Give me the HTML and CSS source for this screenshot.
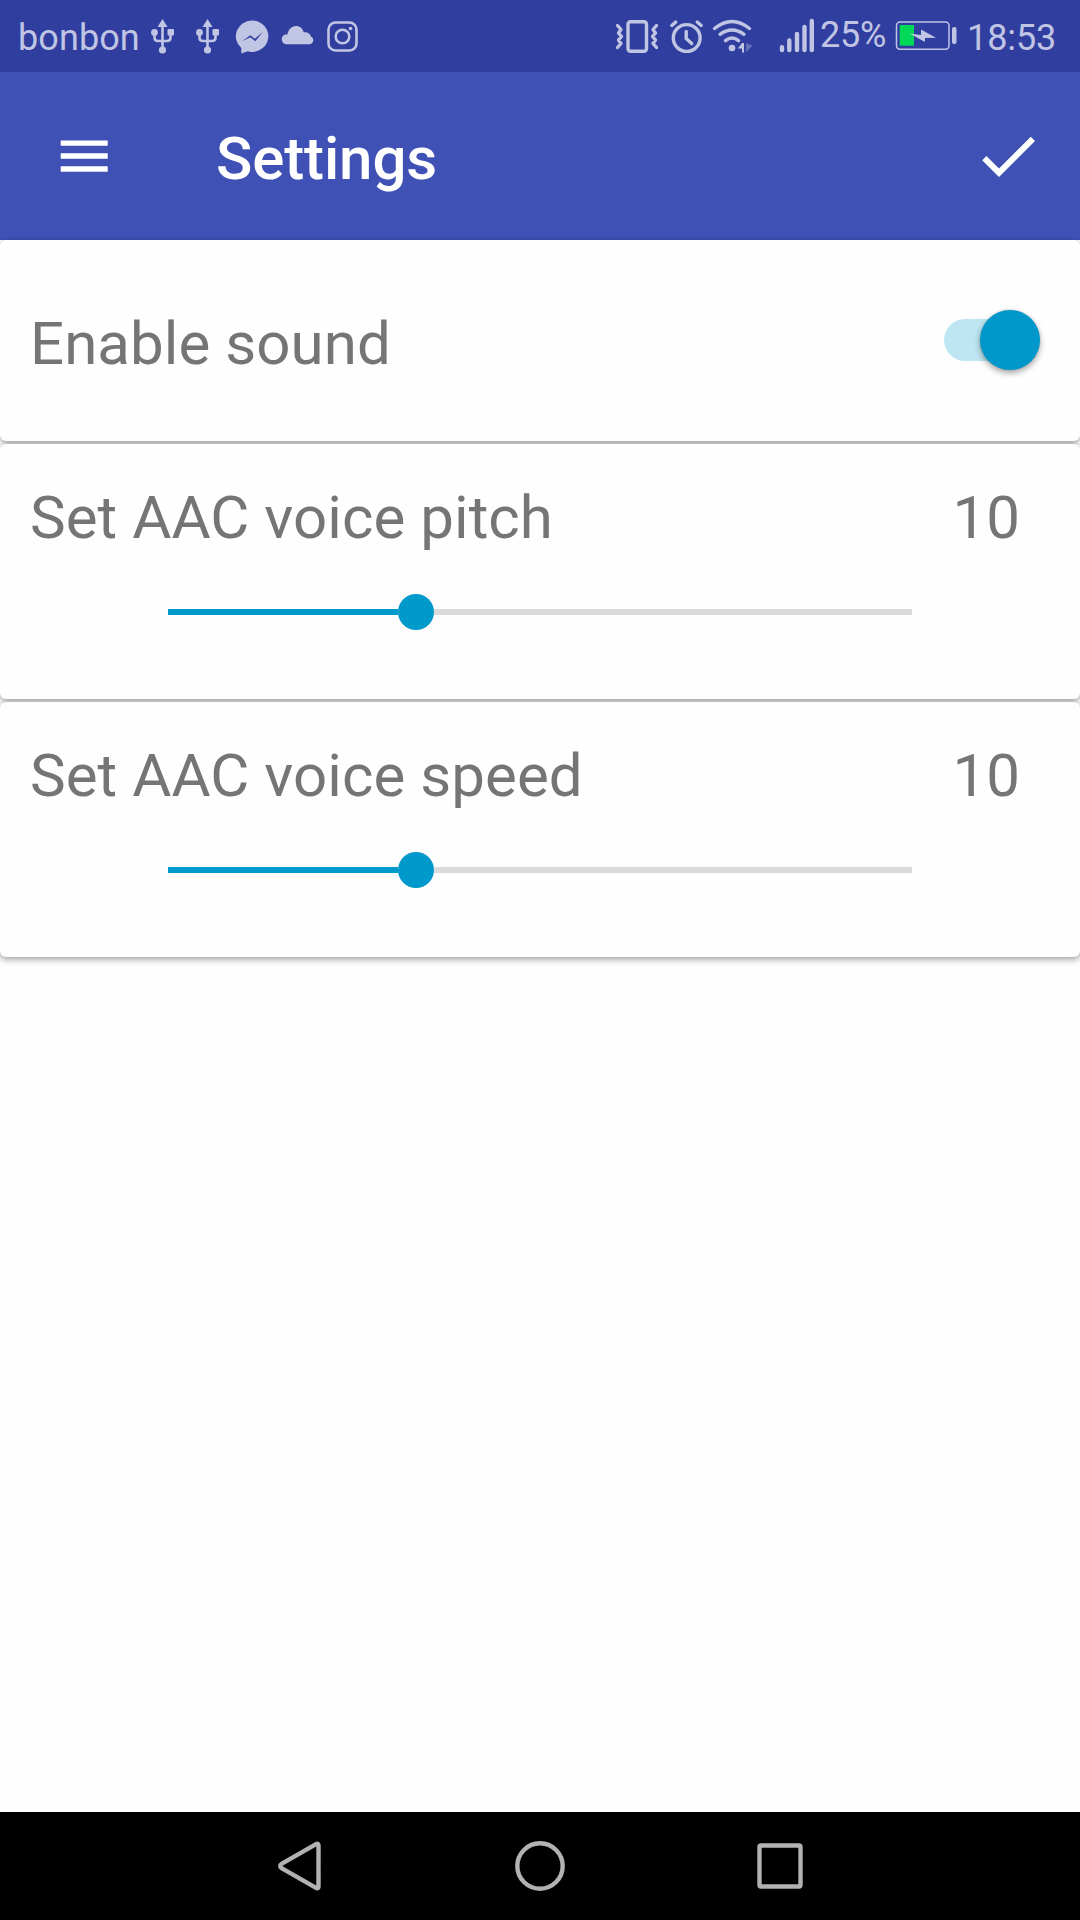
FILE: index.html
```html
<!DOCTYPE html>
<html lang="en">
<head>
<meta charset="utf-8">
<title>Settings</title>
<link rel="stylesheet" href="styles.css">
</head>
<body>
<div class="screen">
  <div class="status-bar">
    <span class="carrier">bonbon</span>
    <svg class="usb" viewBox="0 0 26 72"><path class="fill" d="M13.500 19l5 8h-10z"/><path class="line" d="M13.500 26v24M5.500 33v4.500q0 3.500 3.500 3.500h9q3.500 0 3.500-3.500V33"/><circle class="fill" cx="5.500" cy="32.500" r="3.400"/><rect class="fill" x="18.500" y="29" width="6.500" height="6.500" rx="1"/><circle class="fill" cx="13.500" cy="50" r="3.600"/></svg>
    <svg class="usb" viewBox="0 0 26 72"><path class="fill" d="M13.500 19l5 8h-10z"/><path class="line" d="M13.500 26v24M5.500 33v4.500q0 3.500 3.500 3.500h9q3.500 0 3.500-3.500V33"/><circle class="fill" cx="5.500" cy="32.500" r="3.400"/><rect class="fill" x="18.500" y="29" width="6.500" height="6.500" rx="1"/><circle class="fill" cx="13.500" cy="50" r="3.600"/></svg>
    <svg class="messenger" viewBox="235 0 34 72"><path class="fill" fill-rule="evenodd" d="M252.200 20.500a16.200 15.700 0 1 1-4.500 30.800L241.300 53.500V48A16 15.700 0 0 1 252.200 20.500zM242 41.200l8.300-6 4.500 3.600 8-6.800-7.500 9.200-5-3.900z"/></svg>
    <svg class="cloud" viewBox="280 0 35 72"><path class="fill" d="M286 44.200a5 5 0 0 1-.700-9.700h2.200c.600-4.700 4-8.500 8.500-8.500 4 0 6.700 2.400 7.700 6.200 4.200-.400 6.600 1.400 7.200 4.400a4 4 0 0 1-1 7.600z"/></svg>
    <svg class="instagram" viewBox="326 0 33 72"><rect class="line" x="328.500" y="22.500" width="28" height="28" rx="7"/><circle class="line" cx="342.500" cy="36.500" r="6.800"/><circle class="fill" cx="350.500" cy="28.500" r="1.800"/></svg>
    <svg class="vibrate" viewBox="614 0 46 72"><rect class="line heavy" x="628" y="21.800" width="18.500" height="29.400" rx="2.500"/><path class="line heavy" d="M617.500 25.500l3.500 4-2.500 3.500 3 3.500-3 3.500 2.500 3.500-3.500 4M656.500 25.500l-3.500 4 2.500 3.500-3 3.500 3 3.500-2.500 3.500 3.500 4"/></svg>
    <svg class="alarm" viewBox="668 0 37 72"><circle class="line heavy" cx="686.700" cy="38" r="13.400"/><path class="line heavy" d="M686.200 31.500V38.500l5.500 5"/><path class="line heavy" d="M671.800 25.500l4-3.500M697.200 22l4 3.500"/></svg>
    <svg class="wifi" viewBox="711 0 43 72"><path class="line heavy" d="M714.500 28.500q17.500-14 35 0M720 34.300q12-8.500 24 0M725.500 40.600q6.500-5 13 0"/><circle class="fill" cx="732" cy="48" r="3.300"/><path class="fill" d="M738 48.500l4-5.500h2v9.500h-2v-4z"/><path class="fill faint" d="M746 43l6.500 2.500-6.500 7z"/></svg>
    <svg class="signal" viewBox="779 0 36 72"><path class="bars" d="M782 47.300V50M789.300 40.500V50M797 34v16M804.500 27v23M811.800 21v29"/></svg>
    <span class="percent">25%</span>
    <svg class="battery" viewBox="895 0 62 72"><rect class="case" x="896.500" y="22" width="52.500" height="27.200" rx="3.500"/><path class="charge" d="M899.700 25H914v20.700h-14.300z"/><path class="fill" d="M909.500 33.500l11.500 1.500V29.500l15 8.300-11 .200v4z"/><rect class="fill" x="952" y="27" width="4.500" height="17" rx="2"/></svg>
    <span class="clock">18:53</span>
  </div>

  <header class="app-bar">
    <svg class="menu" viewBox="0 0 48 32"><path d="M.700.500h47v5.300h-47zM.700 13.300h47v5.400h-47zM.700 26.300h47v5.400h-47z"/></svg>
    <h1 class="title">Settings</h1>
    <svg class="check" viewBox="0 0 24 24"><path d="M9 16.170L4.830 12l-1.420 1.410L9 19 21 7l-1.410-1.410z"/></svg>
  </header>

  <main class="content">
    <section class="card sound">
      <span class="label">Enable sound</span>
      <span class="switch"><span class="knob"></span></span>
    </section>
    <section class="card">
      <div class="row"><span class="label">Set AAC voice pitch</span><span class="value">10</span></div>
      <div class="slider"><span class="progress"></span><span class="thumb"></span><span class="rest"></span></div>
    </section>
    <section class="card">
      <div class="row"><span class="label">Set AAC voice speed</span><span class="value">10</span></div>
      <div class="slider"><span class="progress"></span><span class="thumb"></span><span class="rest"></span></div>
    </section>
  </main>

  <nav class="nav-bar">
    <svg class="nav-icon" viewBox="0 0 60 60"><path d="M11.500 27.800L46.500 7.800q2-.500 2 1.500v41.400q0 2-2 1.500L11.500 32.200q-2.500-2.200 0-4.400z"/></svg>
    <svg class="nav-icon" viewBox="0 0 60 60"><circle cx="30" cy="30" r="22.700"/></svg>
    <svg class="nav-icon" viewBox="0 0 60 60"><rect x="9.500" y="9.500" width="41" height="41" rx="1.500"/></svg>
  </nav>
</div>
</body>
</html>
```
FILE: styles.css
```css
* { box-sizing: border-box; }
body { margin: 0; background: #fefefe; font-family: Roboto, sans-serif; }
svg { display: block; flex: none; }
.screen { display: flex; flex-direction: column; width: 1080px; height: 1920px; overflow: hidden; }

.status-bar { display: flex; flex: none; height: 72px; background: #303f9f; color: #c1c5e4; font-size: 36px; line-height: 72px; white-space: nowrap; }
.status-bar svg { height: 72px; }
.fill { fill: #c1c5e4; }
.faint { opacity: .35; }
.line { fill: none; stroke: #c1c5e4; stroke-width: 2.6; stroke-linejoin: round; }
.heavy { stroke-width: 3.4; stroke-linecap: round; }
.bars { fill: none; stroke: #c1c5e4; stroke-width: 4.4; stroke-linecap: round; }
.case { fill: none; stroke: #c1c5e4; stroke-width: 1.5; }
.charge { fill: #00d957; }
.carrier { width: 149px; padding: 2px 0 0 18px; letter-spacing: .1px; }
.usb { width: 26px; }
.usb + .usb { margin-left: 19px; }
.messenger { width: 34px; margin-left: 15px; }
.cloud { width: 35px; margin-left: 11px; }
.instagram { width: 33px; margin-left: 11px; }
.vibrate { width: 46px; margin-left: auto; }
.alarm { width: 37px; margin-left: 8px; }
.wifi { width: 43px; margin-left: 6px; }
.signal { width: 36px; margin-left: 25px; }
.percent { width: 80px; padding-left: 5px; line-height: 70px; letter-spacing: -.2px; }
.battery { width: 62px; }
.clock { width: 123px; padding: 2px 0 0 10px; letter-spacing: -.1px; }

.app-bar { display: flex; flex: none; align-items: center; height: 168px; padding: 0 36px 0 60px; background: #3f51b5; color: #fff; fill: #fff; }
.menu { width: 48px; height: 32px; }
.title { flex: 1; margin: 6px 0 0 108px; font-size: 60px; font-weight: 500; line-height: 70px; letter-spacing: -.12px; }
.check { width: 72px; height: 72px; }

.content { display: flex; flex: 1; flex-direction: column; gap: 3px; }
.card { flex: none; height: 255px; padding-top: 39px; border-radius: 6px; background: #fefefe; box-shadow: 0 3px 6px rgba(0, 0, 0, .32), 0 0 3px rgba(0, 0, 0, .12); color: #757575; font-size: 60px; line-height: 70px; }
.label { letter-spacing: .06px; }
.sound { display: flex; align-items: center; justify-content: space-between; height: 201px; padding: 6px 40px 0 30px; }
.switch { display: flex; justify-content: flex-end; align-items: center; width: 96px; height: 42px; margin-top: -7px; background: linear-gradient(#bde6f2, #bde6f2) no-repeat 0 0 / 84px 42px; border-radius: 21px 0 0 21px; }
.knob { width: 60px; height: 60px; border-radius: 50%; background: #0097cb; box-shadow: 0 3px 6px rgba(0, 0, 0, .35), 0 0 2px rgba(0, 0, 0, .2); }
.row { display: flex; justify-content: space-between; padding: 0 60px 0 30px; }
.slider { display: flex; align-items: center; height: 36px; margin: 41px 168px 0; }
.progress { width: 230px; height: 6px; background: #09c; }
.thumb { width: 36px; height: 36px; border-radius: 50%; background: #09c; }
.rest { flex: 1; height: 6px; background: #dadada; }

.nav-bar { display: flex; flex: none; justify-content: center; gap: 180px; height: 108px; padding-top: 24px; background: #000; }
.nav-icon { width: 60px; height: 60px; fill: none; stroke: #b2b2b2; stroke-width: 4.4; stroke-linejoin: round; }
```
